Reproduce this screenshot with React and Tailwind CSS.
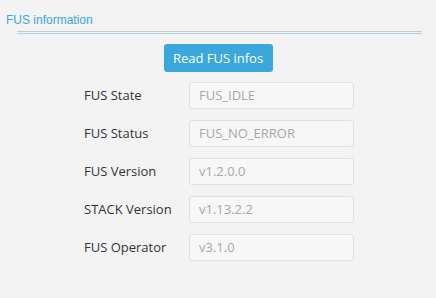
const rows = [
  { label: 'FUS State', value: 'FUS_IDLE' },
  { label: 'FUS Status', value: 'FUS_NO_ERROR' },
  { label: 'FUS Version', value: 'v1.2.0.0' },
  { label: 'STACK Version', value: 'v1.13.2.2' },
  { label: 'FUS Operator', value: 'v3.1.0' },
];

export default function App() {
  return (
    <div className="w-[436px] h-[298px] bg-[#f3f3f3] overflow-hidden" style={{ fontFamily: '"Open Sans", "Noto Sans", sans-serif' }}>
      <div className="pt-[12px] pl-[6px] text-[12px] leading-[16px] text-[#3aa8dc]" style={{ fontFamily: '"Liberation Sans", Arial, sans-serif' }}>
        FUS information
      </div>
      <div className="ml-[17px] w-[405px] mt-[3px] h-[3px] border-t border-b border-t-[#c3cdd0] border-b-[#a9d6e5]" />
      <div className="flex justify-center mt-[10px]">
        <button className="w-[109px] h-[28px] rounded-[3px] bg-[#3ba8db] text-white text-[13px] leading-[28px]">
          Read FUS infos
        </button>
      </div>
      <div className="flex flex-col gap-[11px] mt-[10px] pl-[84px]">
        {rows.map((r) => (
          <div key={r.label} className="flex items-center">
            <div className="w-[105px] text-[13px] text-[#333]">{r.label}</div>
            <div className="w-[165px] h-[27px] rounded-[3px] border border-[#e0e0e0] bg-[#f7f7f7] pl-[9px] text-[13px] leading-[25px] text-[#a8a8a8]">
              {r.value}
            </div>
          </div>
        ))}
      </div>
    </div>
  );
}
